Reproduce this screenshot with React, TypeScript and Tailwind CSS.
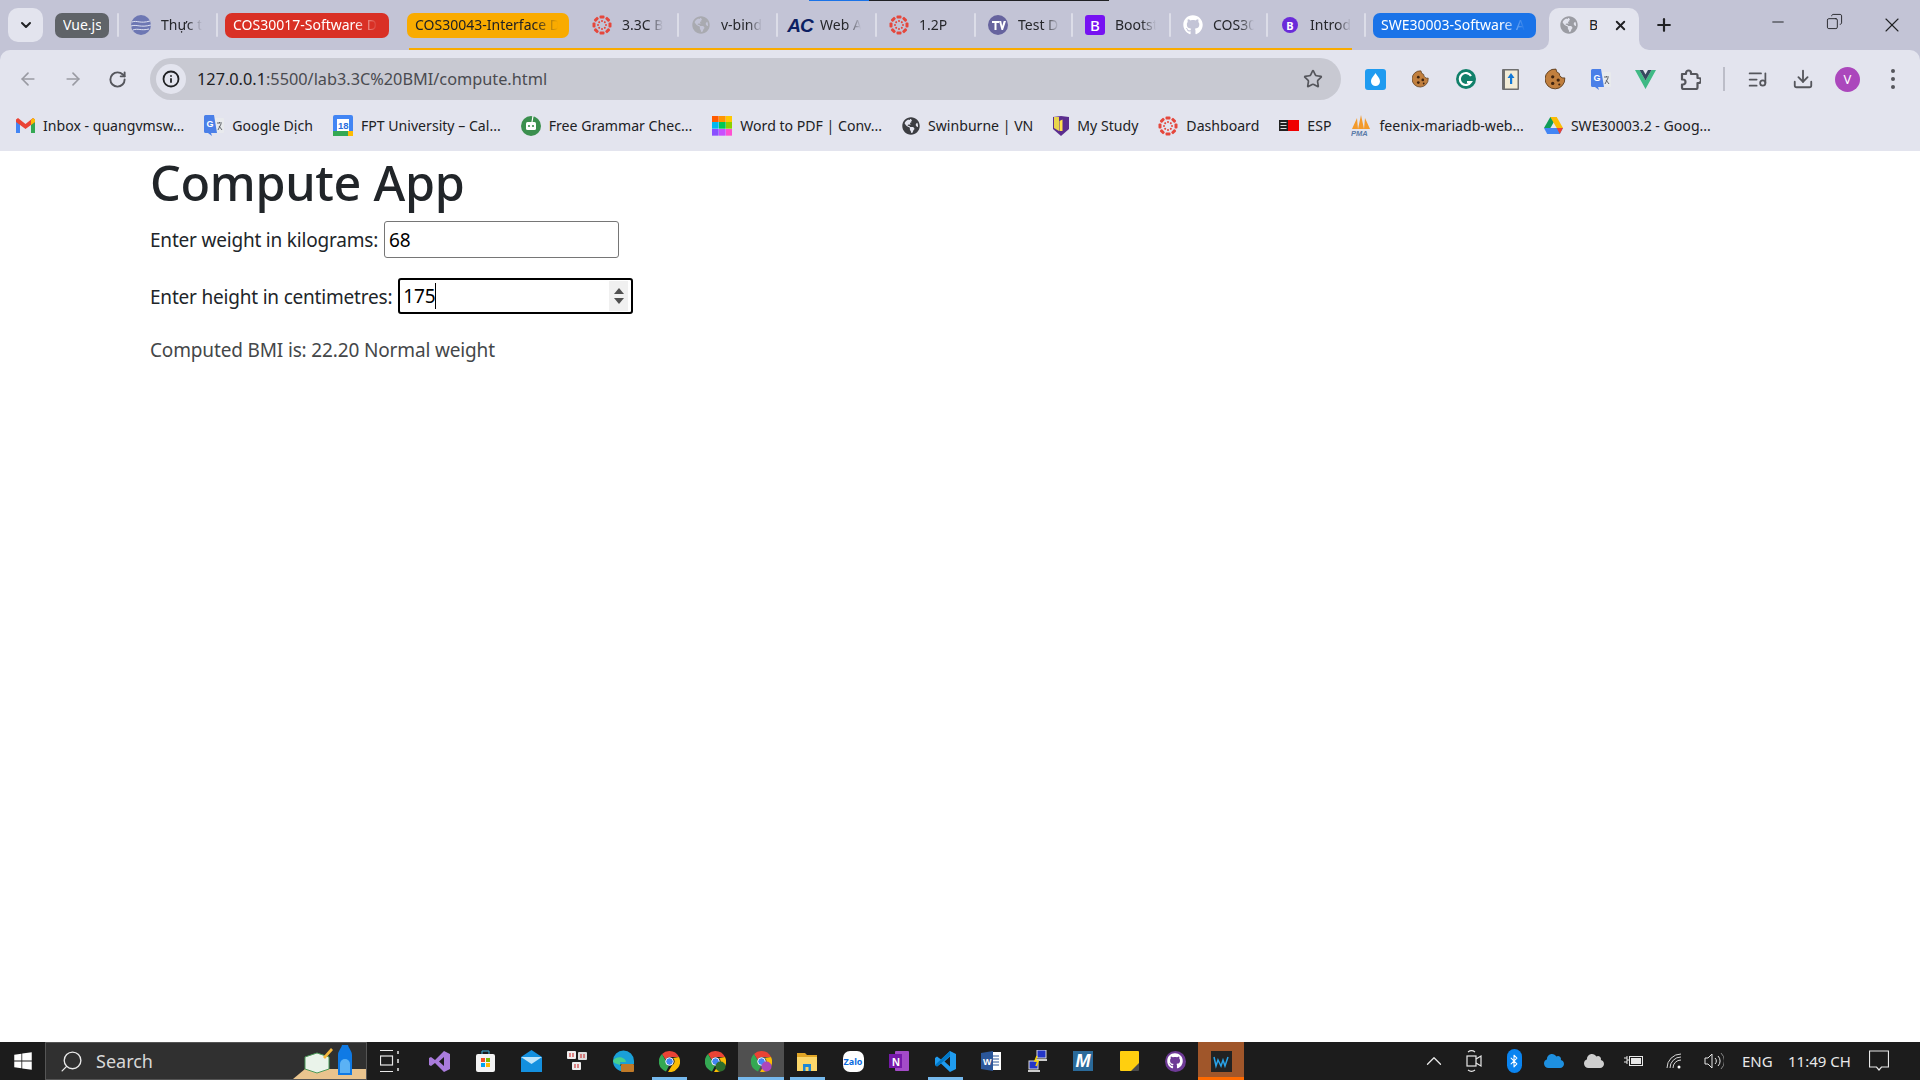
import { ReactNode } from "react";
import { ArrowLeft, ArrowRight, RotateCw, Info, Star, Download, ListMusic, X, Plus, Minus, Search, ChevronDown, ChevronUp, Bluetooth, Copy } from "lucide-react";
import { FaGlobeAmericas, FaGithub, FaCloud, FaWindows } from "react-icons/fa";

const Canvas = ({ size = 20 }: { size?: number }) => (
  <svg width={size} height={size} viewBox="0 0 20 20" className="shrink-0">
    {[0, 45, 90, 135, 180, 225, 270, 315].map((a) => (
      <g key={a} transform={`rotate(${a} 10 10)`}>
        <rect x="7.500" y="0.500" width="5" height="3" rx="1" fill="#e5473c" />
        <circle cx="10" cy="6" r="1" fill="#e5473c" />
      </g>
    ))}
  </svg>
);

const Globe = ({ className }: { className: string }) => <FaGlobeAmericas className={`shrink-0 ${className}`} />;

const Gmail = () => (
  <svg width="19" height="15" viewBox="0 0 19 15" className="shrink-0">
    <path d="M0 2v13h4V6z" fill="#4285f4" />
    <path d="M19 2v13h-4V6z" fill="#34a853" />
    <path d="M0 1.500 2 0l7.500 6L17 0l2 1.500V4l-9.500 7L0 4z" fill="#ea4335" />
    <path d="M15 2 17 0l2 1.500V4l-4 3z" fill="#fbbc04" />
  </svg>
);

const Translate = () => (
  <svg width="20" height="21" viewBox="0 0 20 21" className="shrink-0">
    <rect x="8" y="3" width="12" height="15" rx="1" fill="#e8eaed" />
    <path d="M13 8h5M15.500 7v1M14 15l3-6M18 15l-3-4" stroke="#5f6368" strokeWidth="1" fill="none" />
    <path d="M1.500 0H10l3 18H7l1 3-4-3H1.500A1.500 1.500 0 0 1 0 16.500v-15A1.500 1.500 0 0 1 1.500 0z" fill="#4a7fe8" />
    <text x="2.500" y="12" fontSize="9" fontWeight="700" fill="#fff" fontFamily="Liberation Sans">G</text>
  </svg>
);

const Calendar = () => (
  <svg width="20" height="21" viewBox="0 0 20 21" className="shrink-0">
    <rect width="20" height="21" rx="2" fill="#4285f4" />
    <rect x="0" y="16" width="15" height="5" fill="#34a853" />
    <rect x="15" y="16" width="5" height="5" fill="#fbbc04" />
    <rect x="4" y="4" width="12" height="12" fill="#fff" />
    <text x="5" y="14" fontSize="9.500" fontWeight="700" fill="#2c6fdc" fontFamily="Liberation Sans">18</text>
  </svg>
);

const GrammarBot = () => (
  <svg width="20" height="21" viewBox="0 0 20 21" className="shrink-0">
    <circle cx="10" cy="11" r="10" fill="#3b8f4e" />
    <rect x="5" y="7" width="10" height="8" rx="1.500" fill="#fff" />
    <circle cx="8" cy="11" r="1.100" fill="#3b8f4e" />
    <circle cx="12" cy="11" r="1.100" fill="#3b8f4e" />
    <path d="M11 7 12 1" stroke="#fff" strokeWidth="1.200" />
  </svg>
);

const ColorGrid = () => {
  const cols = ["#ff5a00", "#ff9500", "#ffc800", "#00b8f0", "#00c853", "#8bd100", "#8a4fff", "#c84fff", "#ff4fd0"];
  return (
    <div className="grid h-5 w-5 shrink-0 grid-cols-3">
      {cols.map((c) => (
        <svg key={c} viewBox="0 0 1 1" className="h-full w-full">
          <rect width="1" height="1" fill={c} />
        </svg>
      ))}
    </div>
  );
};

const Shield = () => (
  <svg width="16" height="20" viewBox="0 0 16 20" className="shrink-0">
    <path d="M0 1 8 0l8 1v12l-8 7-8-7z" fill="#5b2d8e" />
    <path d="M1 1h5v14L1 12z" fill="#e8d44d" />
    <path d="M6.500 5 9.500 3.500V15h-3z" fill="#ffe14d" />
  </svg>
);

const EspFlag = () => (
  <svg width="20" height="11" viewBox="0 0 20 11" className="shrink-0">
    <rect width="9" height="11" fill="#222" />
    <rect x="9" width="11" height="11" fill="#f00000" />
    <path d="M1.500 2.500h6M1.500 5.500h6M1.500 8.500h6" stroke="#ddd" strokeWidth="1.200" />
  </svg>
);

const Pma = () => (
  <svg width="20" height="21" viewBox="0 0 20 21" className="shrink-0">
    <path d="M1 14 6 3l1 11zM7 14l3-14 3 14zM13 14l1-11 5 11z" fill="#f39a2b" />
    <text x="0" y="20.500" fontSize="7.500" fontWeight="700" fontStyle="italic" fill="#5a7aa8" fontFamily="Liberation Sans">PMA</text>
  </svg>
);

const Drive = () => (
  <svg width="19" height="17" viewBox="0 0 19 17" className="shrink-0">
    <path d="M6.300 0h6.400l-6.300 11H0z" fill="#0f9d58" />
    <path d="M12.700 0 19 11h-6.300L6.300 0z" fill="#fbbc04" />
    <path d="M0 11h19l-3.200 6H3.200z" fill="#4285f4" />
    <path d="M12.700 11H19l-3.200 6z" fill="#ea4335" />
  </svg>
);

const Tv = () => (
  <svg width="20" height="20" viewBox="0 0 20 20" className="shrink-0">
    <circle cx="10" cy="10" r="10" fill="#66639e" />
    <path d="M4 6h7v2H8.500v7h-2V8H4zM11 6h2.200l1 5 1.500-5H18l-3 9h-1.500z" fill="#fff" />
  </svg>
);

const BootstrapIcon = () => (
  <div className="flex h-5 w-5 shrink-0 items-center justify-center rounded-[3px] bg-[#7612f2] text-[15px] font-medium leading-none text-white">B</div>
);

const IntroIcon = () => (
  <div className="flex h-4 w-4 shrink-0 items-center justify-center rounded-full bg-[#6a2bd9] text-[11px] font-bold leading-none text-white">B</div>
);

const Chip = ({ className, fade, children }: { className: string; fade?: boolean; children: ReactNode }) => (
  <div className={`flex h-[25px] shrink-0 items-center rounded-[7px] px-[8px] text-[14px] leading-[18px] ${className}`}>
    <span className={`overflow-hidden whitespace-nowrap ${fade ? "w-full [mask-image:linear-gradient(to_right,black_82%,transparent_98%)]" : ""}`}>{children}</span>
  </div>
);

const Sep = () => <div className="h-[24px] w-[2px] shrink-0 rounded bg-[#dcdde8]" />;

const Tab = ({ icon, title, className }: { icon: ReactNode; title: string; className: string }) => (
  <div className={`flex shrink-0 items-center gap-[10px] pl-3 ${className}`}>
    <div className="flex w-5 shrink-0 justify-center">{icon}</div>
    <span className="w-[41px] overflow-hidden whitespace-nowrap text-[14px] leading-[18px] text-[#26272b] [mask-image:linear-gradient(to_right,black_65%,transparent_100%)]">{title}</span>
  </div>
);

function TabStrip() {
  return (
    <div className="relative flex h-[50px] items-center pl-2">
      <div className="absolute left-[809px] top-0 h-[1px] w-[60px] bg-[#1a73e8]" />
      <div className="absolute left-[869px] top-0 h-[1px] w-[240px] bg-[#202124]" />
      <div className="absolute bottom-0 left-[409px] h-[2px] w-[943px] bg-[#f9ab00]" />
      <button className="flex h-[34px] w-[35px] shrink-0 items-center justify-center rounded-[10px] bg-[#e3e4ee]">
        <ChevronDown size={16} strokeWidth={3} className="text-[#202124]" />
      </button>
      <Chip className="ml-3 w-[54px] justify-center bg-[#5f6368] text-white">Vue.js</Chip>
      <div className="ml-2"><Sep /></div>
      <Tab className="w-[97px]" icon={<svg width="20" height="24" viewBox="0 0 20 24"><circle cx="10" cy="12" r="10" fill="#6d77b3" /><path d="M1 9c5-2 8 2 18-1M0 13c6-2 9 2 20-1M2 17c5-2 8 1 16-1" stroke="#dfe2f2" strokeWidth="1" fill="none" /></svg>} title="Thực tập" />
      <Sep />
      <Chip fade className="ml-[7px] w-[164px] bg-[#d93025] text-white">COS30017-Software Development</Chip>
      <Chip fade className="ml-[18px] w-[162px] bg-[#f9ab00] text-[#202124]">COS30043-Interface Design</Chip>
      <Tab className="ml-[11px] w-[97px]" icon={<Canvas />} title="3.3C BMI" />
      <Sep />
      <Tab className="w-[97px]" icon={<Globe className="text-[18px] text-[#a9aab0]" />} title="v-bind" />
      <Sep />
      <Tab className="w-[97px]" icon={<span className="text-[19px] font-black italic leading-none tracking-[-1px] text-[#0c1f63] [font-family:'Liberation_Sans']">AC</span>} title="Web Apps" />
      <Sep />
      <Tab className="w-[97px]" icon={<Canvas />} title="1.2P" />
      <Sep />
      <Tab className="w-[95px]" icon={<Tv />} title="Test Drive" />
      <Sep />
      <Tab className="w-[96px]" icon={<BootstrapIcon />} title="Bootstrap" />
      <Sep />
      <Tab className="w-[95px]" icon={<FaGithub className="text-[20px] text-white" />} title="COS30043" />
      <Sep />
      <Tab className="w-[96px]" icon={<IntroIcon />} title="Introduction" />
      <Sep />
      <Chip fade className="ml-[7px] w-[163px] bg-[#1a73e8] text-white">SWE30003-Software Architecture</Chip>
      <div className="relative ml-[13px] flex h-[42px] w-[90px] shrink-0 items-center self-end rounded-t-[10px] bg-[#e3e4ee] pb-[8px] pl-[11px]">
        <svg width="10" height="10" viewBox="0 0 10 10" className="absolute -left-[10px] bottom-0"><path d="M10 0v10H0a10 10 0 0 0 10-10z" fill="#e3e4ee" /></svg>
        <svg width="10" height="10" viewBox="0 0 10 10" className="absolute -right-[10px] bottom-0"><path d="M0 0v10h10A10 10 0 0 1 0 0z" fill="#e3e4ee" /></svg>
        <Globe className="text-[18px] text-[#9b9ca3]" />
        <span className="ml-[11px] w-[8px] overflow-hidden text-[14px] leading-[18px] text-[#202124]">B</span>
        <X size={15} strokeWidth={3} className="ml-[16px] text-[#202124]" />
      </div>
      <Plus size={20} strokeWidth={2.6} className="ml-[15px] text-[#202124]" />
      <div className="ml-auto flex">
        <div className="flex w-[57px] justify-center"><Minus size={18} strokeWidth={1.3} className="text-[#202124]" /></div>
        <div className="flex w-[57px] justify-center"><Copy size={17} strokeWidth={1.3} className="-scale-x-100 text-[#202124]" /></div>
        <div className="flex w-[57px] justify-center"><X size={24} strokeWidth={1.1} className="text-[#202124]" /></div>
      </div>
    </div>
  );
}

const ExtBtn = ({ children }: { children: ReactNode }) => <div className="flex w-[45px] shrink-0 items-center justify-center">{children}</div>;

const Cookie = ({ size }: { size: number }) => (
  <svg width={size} height={size} viewBox="0 0 20 20">
    <path d="M10 1a4 4 0 0 0 3 4 4 4 0 0 0 5 4 9 9 0 1 1-8-8z" fill="#c17f3e" stroke="#5b3a1a" strokeWidth="0.800" />
    <circle cx="7" cy="8" r="1.500" fill="#3f2410" />
    <circle cx="12" cy="11" r="1.500" fill="#3f2410" />
    <circle cx="7" cy="14" r="1.500" fill="#3f2410" />
    <circle cx="13" cy="15" r="1" fill="#3f2410" />
  </svg>
);

function Toolbar() {
  return (
    <div className="flex h-[55px] items-center rounded-t-[10px] bg-[#e3e4ee] pl-[5px] pt-[3px]">
      <ExtBtn><ArrowLeft size={20} strokeWidth={2} className="text-[#9a9ba3]" /></ExtBtn>
      <ExtBtn><ArrowRight size={20} strokeWidth={2} className="text-[#9a9ba3]" /></ExtBtn>
      <ExtBtn><RotateCw size={19} strokeWidth={2.4} className="text-[#55565c]" /></ExtBtn>
      <div className="ml-[10px] flex h-[42px] w-[1191px] shrink-0 items-center rounded-full bg-[#c8c9d2] pl-[6px] pr-[18px]">
        <div className="flex h-[30px] w-[30px] items-center justify-center rounded-full bg-[#e3e4ee]">
          <Info size={18} strokeWidth={2.4} className="text-[#202124]" />
        </div>
        <span className="ml-[11px] whitespace-nowrap text-[16.3px] leading-none text-[#4a4b50]"><span className="text-[#202124]">127.0.0.1</span>:5500/lab3.3C%20BMI/compute.html</span>
        <Star size={20} strokeWidth={2} className="ml-auto text-[#55565c]" />
      </div>
      <div className="ml-[12px] flex">
        <ExtBtn>
          <div className="flex h-[21px] w-[21px] items-center justify-center rounded-[3px] bg-[#1f9bf0]">
            <svg width="9" height="13" viewBox="0 0 9 13"><path d="M4.500 0C6 3 9 5 9 8.500a4.500 4.500 0 0 1-9 0C0 5 3 3 4.500 0z" fill="#fff" /></svg>
          </div>
        </ExtBtn>
        <ExtBtn><Cookie size={18} /></ExtBtn>
        <ExtBtn>
          <svg width="20" height="20" viewBox="0 0 20 20"><circle cx="10" cy="10" r="10" fill="#11806a" /><path d="M15 7a6 6 0 1 0 0 6h-4" fill="none" stroke="#fff" strokeWidth="2.200" /></svg>
        </ExtBtn>
        <ExtBtn>
          <svg width="17" height="21" viewBox="0 0 17 21"><rect width="17" height="21" rx="1" fill="#6f6f6f" /><rect x="3" y="1.500" width="12.500" height="18" fill="#f3ecd6" /><path d="M9 4 5.500 9H8v6h2.200V9h2.300z" fill="#1279d8" /></svg>
        </ExtBtn>
        <ExtBtn><Cookie size={22} /></ExtBtn>
        <ExtBtn><Translate /></ExtBtn>
        <ExtBtn>
          <svg width="21" height="19" viewBox="0 0 21 19"><path d="M0 0h4.500l6 10.500L16.500 0H21L10.500 19z" fill="#3fb984" /><path d="M4.500 0H8l2.500 4.500L13 0h3.500l-6 10.500z" fill="#35495e" /></svg>
        </ExtBtn>
        <ExtBtn>
          <svg width="21" height="21" viewBox="0 0 21 21" fill="none" stroke="#55565c" strokeWidth="2.200" strokeLinejoin="round"><path d="M2 5h4V4a2.500 2.500 0 0 1 5 0v1h5a1.500 1.500 0 0 1 1.500 1.500V9h1a2.500 2.500 0 0 1 0 5h-1v4.500A1.500 1.500 0 0 1 16 20H3.500A1.500 1.500 0 0 1 2 18.500v-3h1a2.500 2.500 0 0 0 0-5H2z" /></svg>
        </ExtBtn>
      </div>
      <div className="ml-[10px] h-[24px] w-[2px] bg-[#bcbdc8]" />
      <div className="ml-[10px] flex">
        <ExtBtn><ListMusic size={21} strokeWidth={2} className="text-[#55565c]" /></ExtBtn>
        <ExtBtn><Download size={22} strokeWidth={2} className="text-[#55565c]" /></ExtBtn>
        <ExtBtn>
          <div className="flex h-[25px] w-[25px] items-center justify-center rounded-full bg-[#ab47bc] text-[13px] leading-none text-white">V</div>
        </ExtBtn>
        <ExtBtn>
          <div className="flex flex-col gap-[4px]">
            <div className="h-[4px] w-[4px] rounded-full bg-[#55565c]" />
            <div className="h-[4px] w-[4px] rounded-full bg-[#55565c]" />
            <div className="h-[4px] w-[4px] rounded-full bg-[#55565c]" />
          </div>
        </ExtBtn>
      </div>
    </div>
  );
}

const Bookmark = ({ icon, label }: { icon: ReactNode; label: string }) => (
  <div className="flex shrink-0 items-center gap-[8px]">
    {icon}
    <span className="whitespace-nowrap text-[14.1px] leading-[18px] text-[#202124]">{label}</span>
  </div>
);

function Bookmarks() {
  return (
    <div className="flex h-[46px] items-center gap-[20px] bg-[#e3e4ee] pb-[5px] pl-[16px]">
      <Bookmark icon={<Gmail />} label="Inbox - quangvmsw..." />
      <Bookmark icon={<Translate />} label="Google Dịch" />
      <Bookmark icon={<Calendar />} label="FPT University – Cal..." />
      <Bookmark icon={<GrammarBot />} label="Free Grammar Chec..." />
      <Bookmark icon={<ColorGrid />} label="Word to PDF | Conv..." />
      <Bookmark icon={<Globe className="text-[18px] text-[#3c3d42]" />} label="Swinburne | VN" />
      <Bookmark icon={<Shield />} label="My Study" />
      <Bookmark icon={<Canvas />} label="Dashboard" />
      <Bookmark icon={<EspFlag />} label="ESP" />
      <Bookmark icon={<Pma />} label="feenix-mariadb-web..." />
      <Bookmark icon={<Drive />} label="SWE30003.2 - Goog..." />
    </div>
  );
}

function Page() {
  return (
    <main className="flex-1 bg-white pl-[150px] text-[19px] leading-[30px] tracking-[-0.2px] text-[#212529]">
      <h1 className="pt-[1px] text-[48.5px] font-[550] leading-[60px] tracking-[-0.3px]">Compute App</h1>
      <div className="mt-[9px] flex items-center gap-[6px]">
        <label>Enter weight in kilograms:</label>
        <div className="flex h-[37px] w-[235px] items-center rounded-[3px] border border-[#767676] pl-[4px] text-black">68</div>
      </div>
      <div className="mt-[20px] flex items-center gap-[6px]">
        <label className="pt-[1px]">Enter height in centimetres:</label>
        <div className="flex h-[36px] w-[235px] items-center rounded-[3px] border-[2px] border-black pl-[3px] pr-[3px] text-black">
          <span>175</span>
          <span className="h-[26px] w-[1px] bg-black" />
          <div className="ml-auto flex h-[30px] w-[19px] flex-col items-center justify-center gap-[4px] bg-[#f0f0f0]">
            <svg width="10" height="6" viewBox="0 0 10 6"><path d="M5 0l5 6H0z" fill="#505050" /></svg>
            <svg width="10" height="6" viewBox="0 0 10 6"><path d="M0 0h10L5 6z" fill="#505050" /></svg>
          </div>
        </div>
      </div>
      <p className="mt-[21px] tracking-[-0.15px] text-[#444749]">Computed BMI is: 22.20 Normal weight</p>
    </main>
  );
}

const TaskBtn = ({ children, active, under }: { children: ReactNode; active?: "gray" | "orange"; under?: "wide" | "short" | "orange" }) => (
  <div className={`relative flex h-full w-[46px] shrink-0 items-center justify-center ${active === "gray" ? "bg-[#505050]" : active === "orange" ? "bg-[#a0562a]" : ""}`}>
    {children}
    {under === "wide" && <div className="absolute bottom-0 h-[3px] w-full bg-[#76b9ed]" />}
    {under === "short" && <div className="absolute bottom-0 h-[3px] w-[35px] bg-[#76b9ed]" />}
    {under === "orange" && <div className="absolute bottom-0 h-[3px] w-full bg-[#ff6a00]" />}
  </div>
);

const Chrome = ({ badge }: { badge?: string }) => (
  <svg width="21" height="21" viewBox="0 0 21 21">
    <path d="M10.500 0A10.500 10.500 0 0 1 20 6H10.500a4.500 4.500 0 0 0-4 2.500L3 3a10.500 10.500 0 0 1 7.500-3z" fill="#ea4335" />
    <path d="M3 3l4 7a4 4 0 0 0 3 4.800L7 20.500A10.500 10.500 0 0 1 3 3z" fill="#34a853" />
    <path d="M20 6a10.500 10.500 0 0 1-11 15l4-6.500a4.500 4.500 0 0 0 1-7.500z" fill="#fbbc04" />
    <circle cx="10.500" cy="10.500" r="3.800" fill="#4285f4" stroke="#fff" strokeWidth="1" />
    {badge && <circle cx="15.500" cy="15.500" r="5" fill={badge} />}
  </svg>
);

function Taskbar() {
  return (
    <footer className="flex h-[38px] shrink-0 items-stretch bg-[#1c1c1c] text-[#e8e8e8]">
      <div className="flex w-[45px] items-center justify-center">
        <FaWindows className="text-[20px] text-white" />
      </div>
      <div className="relative flex w-[322px] items-center border border-[#555] bg-[#303030] pl-[13px]">
        <Search size={25} strokeWidth={1.3} className="-scale-x-100 text-[#e8e8e8]" />
        <span className="ml-[12px] text-[18px] leading-none text-[#d8d8d8]">Search</span>
        <svg width="73" height="36" viewBox="0 0 73 36" className="ml-auto">
          <path d="M0 36 12 26h61v10z" fill="#e9c48e" />
          <path d="M12 14 24 10l12 4v12l-12 4-12-4z" fill="#eaf3ea" stroke="#4d9a5a" />
          <path d="M30 14l8-9 2 2-8 9z" fill="#f6b73c" />
          <path d="M45 32V12c0-4 3-6 4-10h6c1 4 4 6 4 10v20z" fill="#0f7ae5" />
          <path d="M47 30v-9a5 5 0 0 1 10 0v9z" fill="#5bb2f5" />
        </svg>
      </div>
      <div className="flex w-[46px] items-center justify-center">
        <svg width="20" height="22" viewBox="0 0 20 22" fill="none" stroke="#e8e8e8" strokeWidth="1.200"><path d="M0 .5h13M0 21.500h13" /><rect x=".5" y="6" width="12" height="9" /><path d="M18 1v3M18 9v4M18 18v3" strokeWidth="1.500" /></svg>
      </div>
      <div className="ml-[3px] flex">
        <TaskBtn><svg width="21" height="21" viewBox="0 0 21 21"><path d="M15 0l6 3v15l-6 3-9-9-4 3-2-1V7l2-1 4 3zM15 6l-5 4.500 5 4.500z" fill="#a97bdc" fillRule="evenodd" /></svg></TaskBtn>
        <TaskBtn><svg width="19" height="22" viewBox="0 0 19 22"><path d="M6 4V1h7v3" fill="none" stroke="#3ab0d8" /><rect y="4" width="19" height="18" rx="2" fill="#f3f3f3" /><rect x="5" y="8" width="4" height="4" fill="#f25022" /><rect x="10" y="8" width="4" height="4" fill="#7fba00" /><rect x="5" y="13" width="4" height="4" fill="#00a4ef" /><rect x="10" y="13" width="4" height="4" fill="#ffb900" /></svg></TaskBtn>
        <TaskBtn><svg width="21" height="22" viewBox="0 0 21 22"><path d="M0 7 10.500 0 21 7v15H0z" fill="#1490df" /><path d="M0 7h21l-10.500 7z" fill="#bfe5fb" /></svg></TaskBtn>
        <TaskBtn><svg width="20" height="20" viewBox="0 0 20 20"><rect width="9" height="8" rx="1" fill="#eee" /><rect x="11" y="1" width="9" height="8" rx="1" fill="#ddd" /><rect x="5" y="11" width="9" height="8" rx="1" fill="#eee" /><path d="M3 2v4M6 2v4M14 3v4M17 3v4M8 13v4M11 13v4" stroke="#d04040" strokeWidth="1.200" /></svg></TaskBtn>
        <TaskBtn><svg width="21" height="22" viewBox="0 0 21 22"><path d="M0 11a10.500 10.500 0 0 1 21 0v3H7c0 3 4 4 8 3l-1 4C7 23 0 18 0 11z" fill="#1aa0d8" /><path d="M0 11c2-5 12-5 13 1H7c0 1 0 2 1 3-3-1-7-1-8-4z" fill="#46d090" /><rect x="8" y="14" width="13" height="8" rx="1" fill="#c07a28" /></svg></TaskBtn>
        <TaskBtn under="short"><Chrome /></TaskBtn>
        <TaskBtn><Chrome badge="#2e6f2e" /></TaskBtn>
        <TaskBtn active="gray" under="wide"><Chrome badge="#ab47bc" /></TaskBtn>
        <TaskBtn under="short"><svg width="20" height="20" viewBox="0 0 20 20"><path d="M0 2h8l2 2h10v3H0z" fill="#e0a526" /><rect y="6" width="20" height="14" fill="#fbd66a" /><path d="M6 20v-7h8v7h-2.500v-4h-3v4z" fill="#1b87d8" /></svg></TaskBtn>
        <TaskBtn><div className="flex h-[21px] w-[21px] items-center justify-center rounded-[7px] bg-white text-[9px] font-bold leading-none text-[#0a6be0]">Zalo</div></TaskBtn>
        <TaskBtn><svg width="20" height="20" viewBox="0 0 20 20"><rect x="6" y="0" width="14" height="20" rx="1" fill="#a44bc8" /><rect x="0" y="3" width="13" height="14" fill="#7719aa" /><text x="3" y="14.500" fontSize="11" fontWeight="700" fill="#fff" fontFamily="Liberation Sans">N</text></svg></TaskBtn>
        <TaskBtn under="short"><svg width="21" height="21" viewBox="0 0 21 21"><path d="M15 0l6 3v15l-6 3-9-8.500-4 3-2-1.500V7l2-1.500 4 3z" fill="#1f9cf0" /><path d="M15 5.500 9.500 10.500 15 15.500z" fill="#1c1c1c" /><path d="M15 0 0 14l2 1.500L15 5z" fill="#0078c8" /></svg></TaskBtn>
        <TaskBtn><svg width="20" height="20" viewBox="0 0 20 20"><rect x="7" y="1" width="13" height="18" fill="#fff" /><path d="M11 5h7M11 8h7M11 11h7M11 14h7" stroke="#2b579a" /><path d="M0 2 12 0v20L0 18z" fill="#2b579a" /><text x="2" y="13.500" fontSize="9" fontWeight="700" fill="#fff" fontFamily="Liberation Sans">W</text></svg></TaskBtn>
        <TaskBtn><svg width="19" height="22" viewBox="0 0 19 22"><rect x="9" y="0" width="9" height="8" fill="#2436c8" stroke="#ddd" /><rect x="1" y="11" width="9" height="8" fill="#2436c8" stroke="#ddd" /><path d="M0 20h12v2H0zM7 9h12v2H7z" fill="#ccc" /><path d="M9 6 7 11h3l-2 5" stroke="#ffd700" strokeWidth="1.500" fill="none" /></svg></TaskBtn>
        <TaskBtn><div className="flex h-[20px] w-[20px] items-center justify-center bg-[#2a6a9a] text-[18px] font-bold italic leading-none text-white [font-family:'Liberation_Sans']">M</div></TaskBtn>
        <TaskBtn><svg width="19" height="20" viewBox="0 0 19 20"><path d="M1 0h17a1 1 0 0 1 1 1v12l-7 7H1a1 1 0 0 1-1-1V1a1 1 0 0 1 1-1z" fill="#ffcf0f" /><path d="M19 12v7a1 1 0 0 1-1 1h-7z" fill="#4a4a4a" /></svg></TaskBtn>
        <TaskBtn><div className="flex h-[21px] w-[21px] items-center justify-center rounded-full bg-[#6e3a96]"><FaGithub className="text-[16px] text-white" /></div></TaskBtn>
        <TaskBtn active="orange" under="orange">
          <svg width="21" height="21" viewBox="0 0 21 21"><rect width="21" height="21" fill="#222" /><path d="M3 6l2 9 2-6 3 6 2-6 2 6 3-9" fill="none" stroke="#29a3e8" strokeWidth="1.500" /></svg>
        </TaskBtn>
      </div>
      <div className="ml-auto flex items-center pr-[31px]">
        <div className="flex w-[40px] justify-center"><ChevronUp size={26} strokeWidth={1.2} /></div>
        <div className="flex w-[40px] justify-center">
          <svg width="16" height="22" viewBox="0 0 16 22" fill="none" stroke="#e8e8e8" strokeWidth="1.200"><rect x="1" y="6" width="9" height="10" /><path d="M10 9l5-3v10l-5-3M2 2c2-1.500 5-1.500 7 0M2 20c2 1.500 5 1.500 7 0" /></svg>
        </div>
        <div className="flex w-[40px] justify-center">
          <div className="flex h-[24px] w-[15px] items-center justify-center rounded-full bg-[#0a84f0]"><Bluetooth size={14} strokeWidth={1.8} className="text-white" /></div>
        </div>
        <div className="flex w-[40px] justify-center"><FaCloud className="text-[20px] text-[#1e90e0]" /></div>
        <div className="flex w-[40px] justify-center"><FaCloud className="text-[20px] text-[#cfcfcf]" /></div>
        <div className="flex w-[40px] justify-center">
          <svg width="20" height="14" viewBox="0 0 20 14" fill="none" stroke="#e8e8e8"><path d="M0 4h3M0 8h3M3 2v8M3 6h2" /><rect x="5.500" y="2.500" width="13" height="9" /><rect x="7" y="4" width="10" height="6" fill="#e8e8e8" stroke="none" /></svg>
        </div>
        <div className="flex w-[40px] justify-center">
          <svg width="16" height="16" viewBox="0 0 16 16" fill="none" stroke="#d8d8d8"><path d="M1 15A14 14 0 0 1 15 1M4 15A11 11 0 0 1 15 4M7 15a8 8 0 0 1 8-8" /><circle cx="13" cy="14" r="1.500" fill="#fff" stroke="none" /></svg>
        </div>
        <div className="flex w-[40px] justify-center">
          <svg width="20" height="18" viewBox="0 0 20 18" fill="none" stroke="#e8e8e8"><path d="M1 6h3l4-4v14l-4-4H1zM11 6a4 4 0 0 1 0 6M14 4a7 7 0 0 1 0 10" /><path d="M17 1a11 11 0 0 1 0 16" stroke="#888" /></svg>
        </div>
        <span className="ml-2 w-[28px] text-[15px] leading-none">ENG</span>
        <span className="ml-[18px] w-[57px] whitespace-nowrap text-[15px] leading-none">11:49 CH</span>
        <div className="ml-[24px]">
          <svg width="20" height="22" viewBox="0 0 20 22" fill="none" stroke="#e8e8e8" strokeWidth="1.200"><path d="M.5 1h19v16h-7l-2.500 3-2.500-3h-7z" /></svg>
        </div>
      </div>
    </footer>
  );
}

export default function App() {
  return (
    <div className="flex h-screen w-full flex-col overflow-hidden bg-[#c3c4d6] [font-family:'Noto_Sans','Open_Sans',sans-serif]">
      <TabStrip />
      <Toolbar />
      <Bookmarks />
      <Page />
      <Taskbar />
    </div>
  );
}
